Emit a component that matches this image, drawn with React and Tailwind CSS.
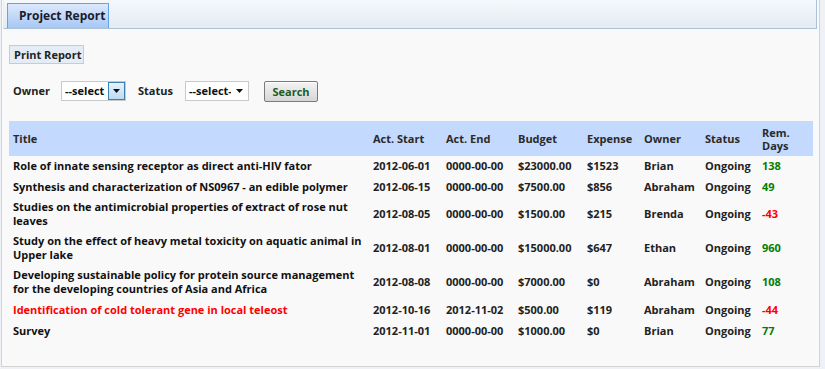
import React from 'react';

const rows = [
    { title: 'Role of innate sensing receptor as direct anti-HIV fator', start: '2012-06-01', end: '0000-00-00', budget: '$23000.00', expense: '$1523', owner: 'Brian', status: 'Ongoing', days: 138 },
    { title: 'Synthesis and characterization of NS0967 - an edible polymer', start: '2012-06-15', end: '0000-00-00', budget: '$7500.00', expense: '$856', owner: 'Abraham', status: 'Ongoing', days: 49 },
    { title: 'Studies on the antimicrobial properties of extract of rose nut leaves', start: '2012-08-05', end: '0000-00-00', budget: '$1500.00', expense: '$215', owner: 'Brenda', status: 'Ongoing', days: -43 },
    { title: 'Study on the effect of heavy metal toxicity on aquatic animal in Upper lake', start: '2012-08-01', end: '0000-00-00', budget: '$15000.00', expense: '$647', owner: 'Ethan', status: 'Ongoing', days: 960 },
    { title: 'Developing sustainable policy for protein source management for the developing countries of Asia and Africa', start: '2012-08-08', end: '0000-00-00', budget: '$7000.00', expense: '$0', owner: 'Abraham', status: 'Ongoing', days: 108 },
    { title: 'Identification of cold tolerant gene in local teleost', start: '2012-10-16', end: '2012-11-02', budget: '$500.00', expense: '$119', owner: 'Abraham', status: 'Ongoing', days: -44, late: true },
    { title: 'Survey', start: '2012-11-01', end: '0000-00-00', budget: '$1000.00', expense: '$0', owner: 'Brian', status: 'Ongoing', days: 77 },
];

const Arrow = () => (
    <svg width="7" height="4" viewBox="0 0 7 4" className="block">
        <path d="M0 0 H7 L3.5 4 Z" fill="#111" />
    </svg>
);

const Select = ({ width, focused }) => (
    <div className={`flex items-stretch h-[20px] ${width} bg-white border border-[#c9c9c9]`}>
        <span className="flex-1 pl-[3px] leading-[18px] text-[#111] overflow-hidden whitespace-nowrap">
            {focused ? '--select' : '--select-'}
        </span>
        {focused ? (
            <span className="w-[17px] flex items-center justify-center bg-gradient-to-b from-[#e6f2fc] to-[#bcdcf4] border border-[#3c7fb1]">
                <Arrow />
            </span>
        ) : (
            <span className="w-[17px] flex items-center justify-center">
                <Arrow />
            </span>
        )}
    </div>
);

const cell = 'px-[4px] pt-[2px] pb-[4px]';

export default function App() {
    return (
        <div className="w-[825px] h-[369px] bg-[#eef2f7] font-['Open_Sans',sans-serif] text-[11px] font-bold text-[#111]">
            <div className="ml-[1px] w-[819px] h-[367px] bg-[#f9f9f9] border-l border-r border-b border-[#d2d2d2]">
                {/* tab strip */}
                <div className="ml-[1px] w-[814px] h-[29px] pt-[3px] pl-[3px] bg-gradient-to-b from-[#f5f8fb] to-[#e3ebf3] border-l border-l-[#e8eef4] border-r border-b border-[#a9c1d9] flex">
                    <div className="w-[102px] h-[25px] border border-b-0 border-[#62a3ea] bg-gradient-to-b from-[#dce9fc] to-[#a7c7f4] text-[12px] text-[#1b1b2b] leading-[24px] pl-[11px]">
                        Project Report
                    </div>
                </div>

                <div className="pl-[7px]">
                    <div className="mt-[16px] w-[75px] h-[19px] bg-[#e4edf6] border border-[#b8cfe4] text-[#222] leading-[17px] pl-[4px]">
                        Print Report
                    </div>

                    <div className="mt-[16px] h-[22px] flex items-center text-[#222]">
                        <span className="ml-[4px] w-[48px]">Owner</span>
                        <Select width="w-[65px]" focused />
                        <span className="ml-[12px] w-[47px]">Status</span>
                        <Select width="w-[64px]" />
                        <div className="ml-[15px] w-[54px] h-[21px] rounded-[2px] border border-[#7a7a7a] bg-gradient-to-b from-[#f4f4f4] to-[#d6d6d6] text-[#1f5a1f] text-center leading-[19px] shadow-[inset_0_1px_0_#fff]">
                            Search
                        </div>
                    </div>

                    <table className="mt-[19px] w-[804px] table-fixed border-collapse">
                        <colgroup>
                            <col className="w-[360px]" />
                            <col className="w-[73px]" />
                            <col className="w-[72px]" />
                            <col className="w-[69px]" />
                            <col className="w-[57px]" />
                            <col className="w-[61px]" />
                            <col className="w-[57px]" />
                            <col className="w-[55px]" />
                        </colgroup>
                        <thead>
                            <tr className="h-[35px] bg-[#c3d9fd] text-left text-[#2a2a2a] leading-[13px]">
                                <th className="px-[4px] font-bold">Title</th>
                                <th className="px-[4px] font-bold">Act. Start</th>
                                <th className="px-[4px] font-bold">Act. End</th>
                                <th className="px-[4px] font-bold">Budget</th>
                                <th className="px-[4px] font-bold">Expense</th>
                                <th className="px-[4px] font-bold">Owner</th>
                                <th className="px-[4px] font-bold">Status</th>
                                <th className="px-[4px] font-bold">Rem.<br />Days</th>
                            </tr>
                        </thead>
                        <tbody className="leading-[14px]">
                            {rows.map(r => (
                                <tr key={r.title} className="h-[21px]">
                                    <td className={`${cell} ${r.late ? 'text-[#ff0000]' : 'text-[#111]'}`}>{r.title}</td>
                                    <td className={`${cell} text-[#222]`}>{r.start}</td>
                                    <td className={`${cell} text-[#222]`}>{r.end}</td>
                                    <td className={`${cell} text-[#222]`}>{r.budget}</td>
                                    <td className={`${cell} text-[#222]`}>{r.expense}</td>
                                    <td className={`${cell} text-[#222]`}>{r.owner}</td>
                                    <td className={`${cell} text-[#222]`}>{r.status}</td>
                                    <td className={`${cell} ${r.days < 0 ? 'text-[#ff0000]' : 'text-[#008000]'}`}>{r.days}</td>
                                </tr>
                            ))}
                        </tbody>
                    </table>
                </div>
            </div>
        </div>
    );
}
